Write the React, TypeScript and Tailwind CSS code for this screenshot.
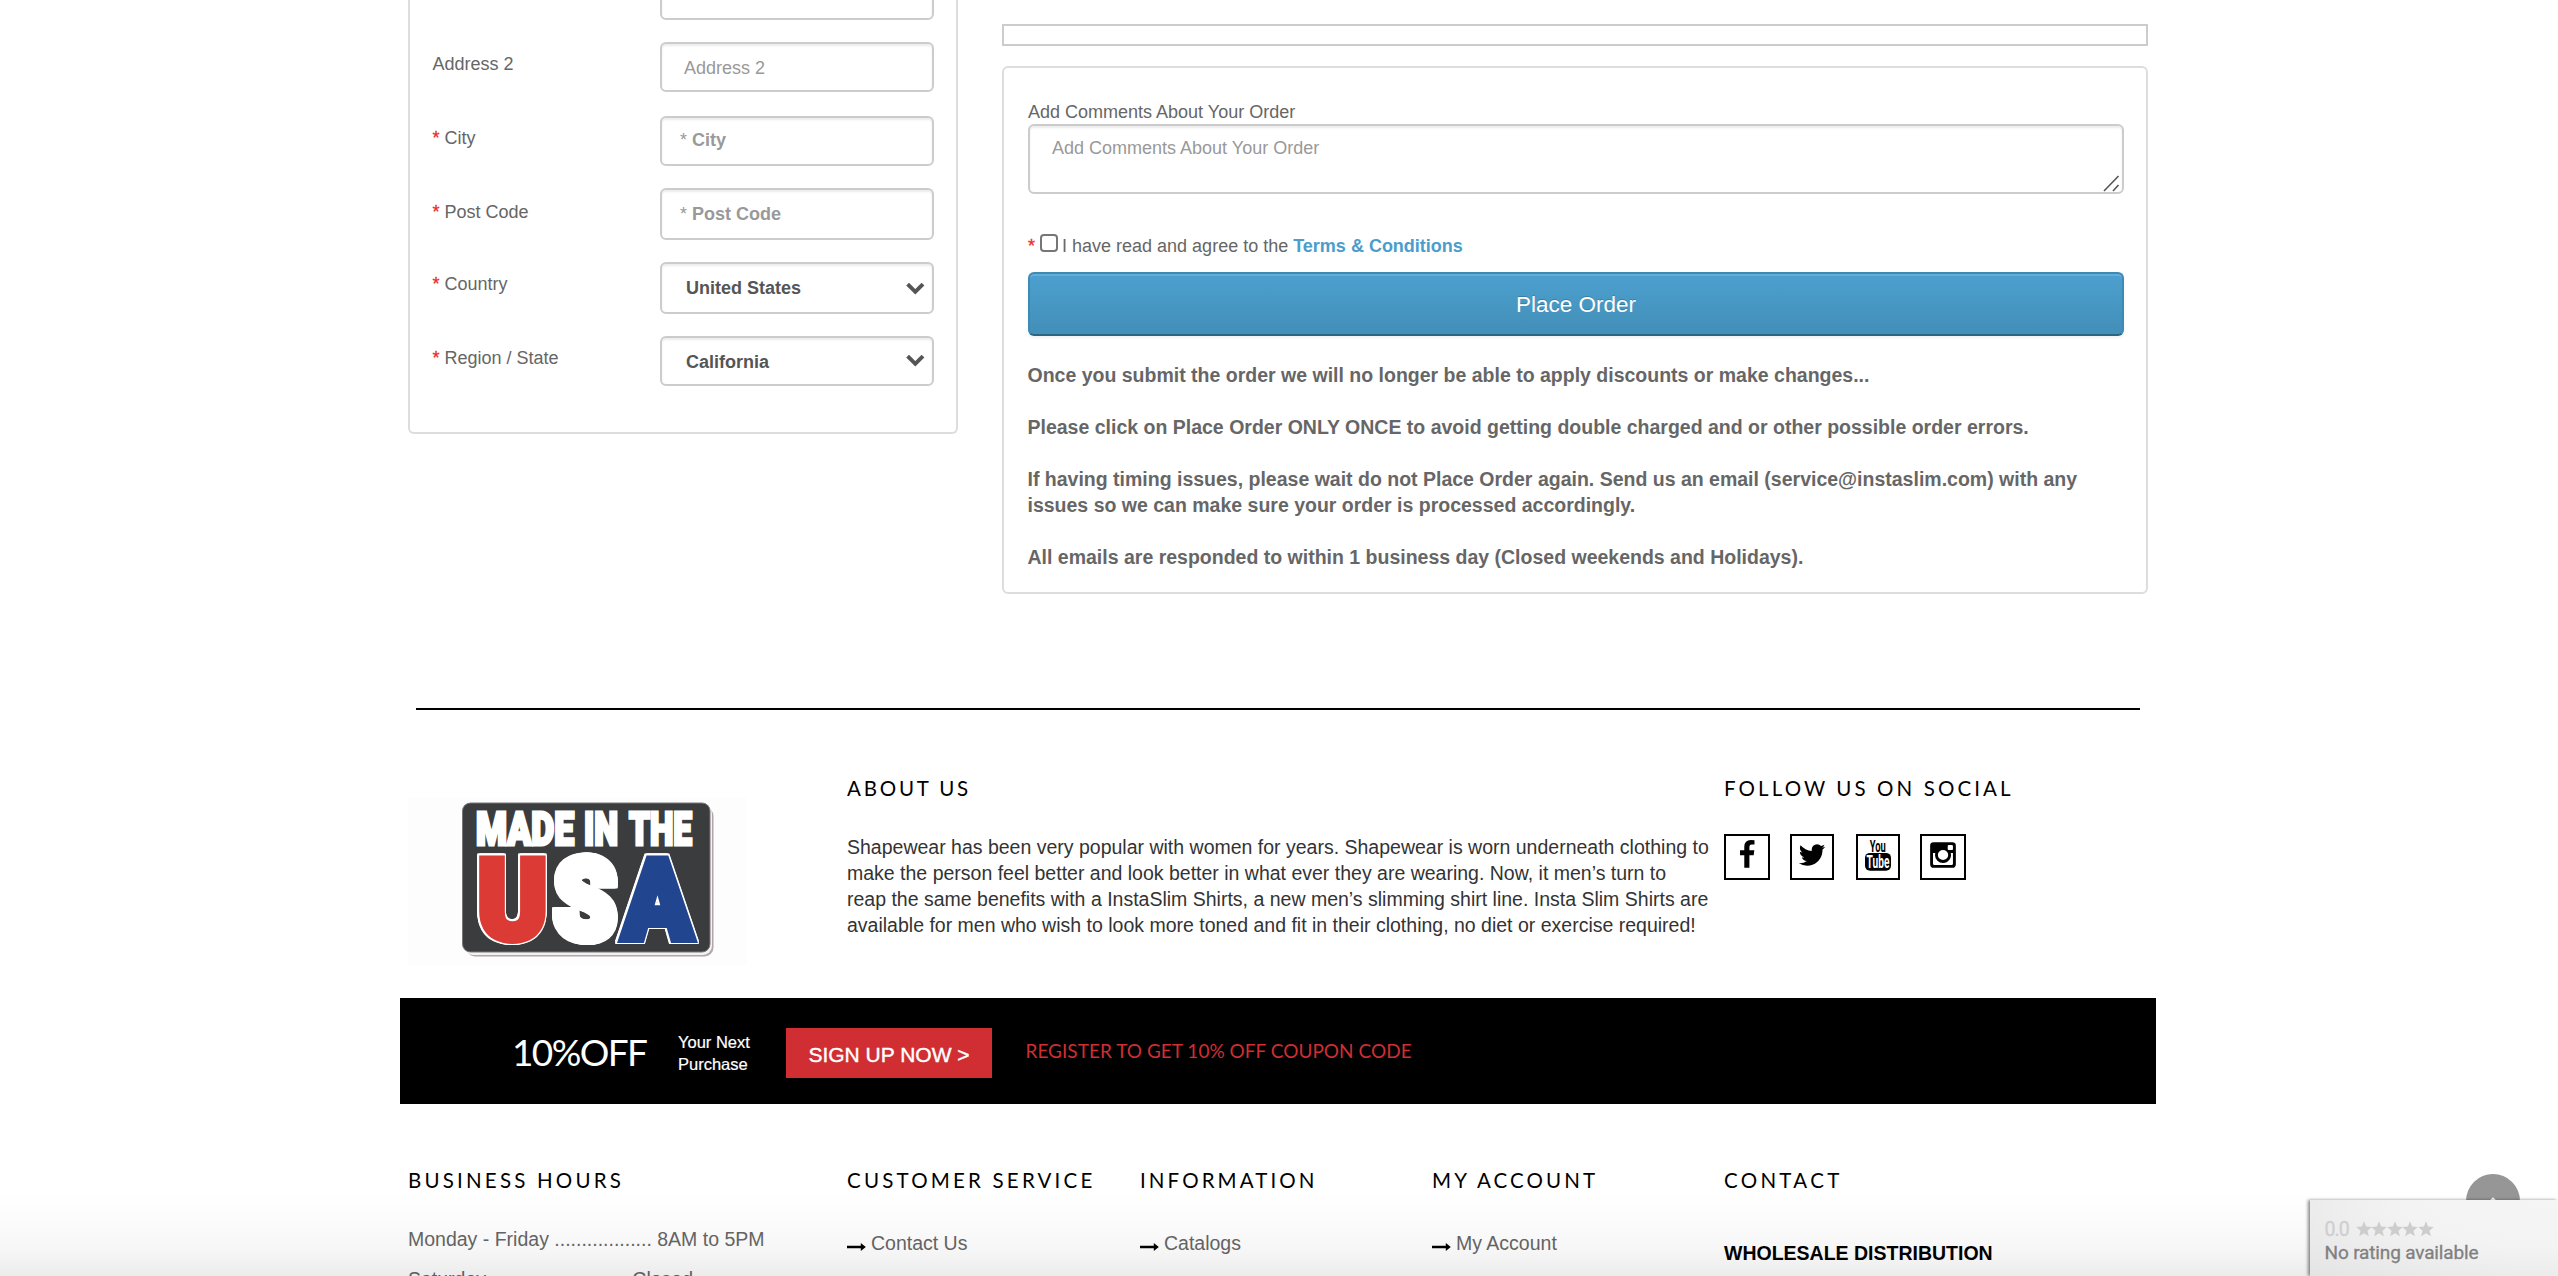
import type { ReactNode } from "react";

const fieldClass =
  "flex w-[274px] shrink-0 items-start rounded-[6px] border-2 border-[#ccc] bg-white text-[18px] leading-[26px] shadow-[inset_0_2px_2px_rgba(0,0,0,0.075)]";

function FieldRow({
  label,
  required,
  className,
  labelClass,
  children,
}: {
  label: string;
  required?: boolean;
  className: string;
  labelClass: string;
  children: ReactNode;
}) {
  return (
    <div className={`flex items-start justify-between ${className}`}>
      <div className={`ml-[-0.5px] whitespace-pre text-[18px] leading-[26px] text-[#666] ${labelClass}`}>
        {required && <span className="text-[#f02a1d] [-webkit-text-stroke:0.3px_#f02a1d]">* </span>}
        {label}
      </div>
      {children}
    </div>
  );
}

function Chevron({ className }: { className: string }) {
  return (
    <svg className={className} width="19" height="13" viewBox="0 0 19 13" fill="none">
      <path d="M1.6 2.2 9.3 9.8 17 2.2" stroke="#555" strokeWidth="4" />
    </svg>
  );
}

const usaLetters = [
  { char: "U", x: 477.5, width: 70, color: "#db3b34" },
  { char: "S", x: 554.5, width: 62, color: "#ffffff" },
  { char: "A", x: 622.5, width: 70, color: "#21458f" },
];

function MadeInUsa() {
  return (
    <svg
      width="339"
      height="167"
      viewBox="408 798 339 167"
      fontFamily="Roboto, 'Liberation Sans', sans-serif"
      fontWeight="900"
      strokeLinejoin="miter"
    >
      <rect x="408" y="798" width="339" height="167" fill="#fdfdfe" />
      <rect x="466" y="807" width="247.5" height="149.5" rx="9" fill="#b3a6a8" />
      <rect x="464" y="805" width="248" height="150" rx="9" fill="#f4f1f2" />
      <rect x="462.5" y="803" width="247.5" height="149" rx="8" fill="#3a3c3d" stroke="#77777a" strokeWidth="1" />
      <g fill="#fff" stroke="#fff" strokeWidth="3.2" fontSize="46">
        <text x="476" y="845.4" textLength="98" lengthAdjust="spacingAndGlyphs">MADE</text>
        <text x="584" y="845.4" textLength="34" lengthAdjust="spacingAndGlyphs">IN</text>
        <text x="629" y="845.4" textLength="63" lengthAdjust="spacingAndGlyphs">THE</text>
      </g>
      {/* A wide white outline sits behind a narrower one in the letter's own colour. */}
      {usaLetters.map((l) => (
        <text
          key={l.char}
          x={l.x}
          y="939"
          fontSize="112"
          textLength={l.width}
          lengthAdjust="spacingAndGlyphs"
          fill={l.color}
          stroke={l.color}
          strokeWidth="8"
          className="[filter:drop-shadow(1.6px_0_0_#fff)_drop-shadow(-1.6px_0_0_#fff)_drop-shadow(0_1.6px_0_#fff)_drop-shadow(0_-1.6px_0_#fff)]"
        >
          {l.char}
        </text>
      ))}
    </svg>
  );
}

const facebook =
  "M1343 12v264h-157q-86 0-116 36t-30 108v189h293l-39 296h-254v759H734V905H479V609h255V391q0-186 104-288.5T1115 0q147 0 228 12z";
const twitter =
  "M1684 408q-67 98-162 167 1 14 1 42 0 130-38 259.5T1369.5 1125 1185 1335.5t-258 146-323 54.5q-271 0-496-145 35 4 78 4 225 0 401-138-105-2-188-64.5T285 1033q33 5 61 5 43 0 85-11-112-23-185.5-111.5T172 710v-4q68 38 146 41-66-44-105-115t-39-154q0-88 44-163 121 149 294.5 238.5T884 653q-8-38-8-74 0-134 94.5-228.5T1199 256q140 0 236 102 109-21 205-78-37 115-142 178 93-10 186-50z";
const instagram =
  "M1490 1426v-648h-135q20 63 20 131 0 126-64 232.5T1137 1310t-240 62q-197 0-337-135.5T420 909q0-68 20-131H299v648q0 26 17.5 43.5T360 1487h1069q25 0 43-17.5t18-43.5zm-284-533q0-124-90.5-211.5T897 594q-127 0-217.5 87.5T589 893t90.5 211.5T897 1192q128 0 218.5-87.5T1206 893zm284-360V368q0-28-20-48.5t-49-20.5h-174q-29 0-49 20.5t-20 48.5v165q0 29 20 49t49 20h174q29 0 49-20t20-49zm174-208v1142q0 81-58 139t-139 58H325q-81 0-139-58t-58-139V325q0-81 58-139t139-58h1142q81 0 139 58t58 139z";

function SocialBox({ className, children }: { className: string; children: ReactNode }) {
  return (
    <a className={`flex h-[46px] items-start justify-center border-2 border-black pt-1 ${className}`}>{children}</a>
  );
}

function Glyph({ d }: { d: string }) {
  return (
    <svg width="30" height="30" viewBox="0 0 1792 1792">
      <path d={d} />
    </svg>
  );
}

function YouTube() {
  return (
    <svg width="28" height="32" viewBox="0 0 28 32" fontFamily="Roboto, 'Liberation Sans', sans-serif" fontWeight="700">
      <text x="5.8" y="12" fontSize="16.5" textLength="16" lengthAdjust="spacingAndGlyphs">
        You
      </text>
      <rect x="1" y="12.9" width="26" height="17.8" rx="5" />
      <text x="2.6" y="28" fontSize="17.5" fill="#fff" textLength="22.8" lengthAdjust="spacingAndGlyphs">
        Tube
      </text>
    </svg>
  );
}

function Heading({ className = "", children }: { className?: string; children: ReactNode }) {
  return (
    <h3 className={`whitespace-nowrap font-[Lato,sans-serif] text-[20.5px] leading-[26px] text-black ${className}`}>
      {children}
    </h3>
  );
}

function FooterLink({ children }: { children: ReactNode }) {
  return (
    <a className="mt-[37px] flex items-start text-[19.5px] leading-[26px] text-[#666]">
      <svg className="mt-3 mr-[5px]" width="19" height="10" viewBox="0 0 19 10">
        <path d="M0 3.7h13.8V1l5 4-5 4V6.3H0z" fill="#000" />
      </svg>
      {children}
    </a>
  );
}

export default function App() {
  return (
    <div className="relative h-[1276px] w-full overflow-hidden bg-white font-['Liberation_Sans',Arial,sans-serif] text-[#666]">
      <div className="ml-[400px] w-[1756px]">
        <main className="flex h-[708px] items-start">
          <section className="ml-2 h-[434px] w-[550px] rounded-b-[6px] border-2 border-t-0 border-[#ddd] pr-[22px] pl-[23px]">
            <FieldRow label="Address 1" required className="mt-[-30px]" labelClass="mt-[7px]">
              <div className={`${fieldClass} h-[50px] pt-[9px] pl-[18px] text-[#999]`}>
                <span className="whitespace-pre">* <b>Address 1</b></span>
              </div>
            </FieldRow>
            <FieldRow label="Address 2" className="mt-[22px]" labelClass="mt-[9px]">
              <div className={`${fieldClass} h-[50px] pt-[11px] pl-[22px] text-[#999]`}>Address 2</div>
            </FieldRow>
            <FieldRow label="City" required className="mt-6" labelClass="mt-[9px]">
              <div className={`${fieldClass} h-[50px] pt-[9px] pl-[18px] text-[#999]`}>
                <span className="whitespace-pre">* <b>City</b></span>
              </div>
            </FieldRow>
            <FieldRow label="Post Code" required className="mt-[22px]" labelClass="mt-[11px]">
              <div className={`${fieldClass} h-[52px] pt-[11px] pl-[18px] text-[#999]`}>
                <span className="whitespace-pre">* <b>Post Code</b></span>
              </div>
            </FieldRow>
            <FieldRow label="Country" required className="mt-[22px]" labelClass="mt-[9px]">
              <div className={`${fieldClass} h-[52px] justify-between pt-[11px] pr-[7px] pl-6 font-bold text-[#555]`}>
                United States
                <Chevron className="mt-[7px]" />
              </div>
            </FieldRow>
            <FieldRow label="Region / State" required className="mt-[22px]" labelClass="mt-[9px]">
              <div className={`${fieldClass} h-[50px] justify-between pt-[11px] pr-[7px] pl-6 font-bold text-[#555]`}>
                California
                <Chevron className="mt-[5px]" />
              </div>
            </FieldRow>
          </section>

          <section className="ml-11 w-[1146px] pt-6">
            <div className="h-[22px] border-2 border-[#ccc]" />
            <div className="mt-5 h-[528px] rounded-[6px] border-2 border-[#ddd] pt-[31px] pr-[22px] pl-6">
              <div className="h-[25px] text-[18px] leading-[26px]">Add Comments About Your Order</div>
              <div className="flex h-[70px] items-start justify-between rounded-[6px] border-2 border-[#ccc] pt-[9px] pr-[2px] pl-[22px] text-[18px] leading-[26px] text-[#999] shadow-[inset_0_2px_2px_rgba(0,0,0,0.075)]">
                Add Comments About Your Order
                <svg className="mt-[39px]" width="18" height="18" viewBox="0 0 18 18" fill="none" stroke="#555" strokeWidth="1.6">
                  <path d="M2 17 16.5 2M11 17l5.5-6" />
                </svg>
              </div>
              <div className="mt-[39px] flex h-[26px] items-start text-[18px] leading-[26px]">
                <span className="text-[#f02a1d] [-webkit-text-stroke:0.3px_#f02a1d]">*</span>
                <span className="mt-px mr-1 ml-[5px] h-[18px] w-[18px] rounded-[4px] border-2 border-[#767676] bg-white" />
                <span className="whitespace-pre">I have read and agree to the </span>
                <a className="font-bold text-[#4a9dcc]">Terms &amp; Conditions</a>
              </div>
              <div className="mt-[13px] flex h-16 justify-center rounded-[6px] border-2 border-[#3d8ab6] border-b-[#2c6583] bg-linear-to-b from-[#4ca0cf] to-[#428fb8] pt-[18px] text-[22.5px] leading-[26px] text-white shadow-[inset_0_2px_0_rgba(255,255,255,0.15),0_2px_3px_rgba(0,0,0,0.06)] [text-shadow:0_-1px_0_rgba(0,0,0,0.2)]">
                Place Order
              </div>
              <div className="mt-[26px] ml-[-0.5px] flex flex-col gap-[26px] text-[19.5px] leading-[26px] font-bold whitespace-nowrap">
                <p>Once you submit the order we will no longer be able to apply discounts or make changes...</p>
                <p>
                  Please click on Place Order ONLY ONCE to avoid getting double charged and or other possible order errors.
                </p>
                <p>
                  If having timing issues, please wait do not Place Order again. Send us an email (service@instaslim.com)
                  with any
                  <br />
                  issues so we can make sure your order is processed accordingly.
                </p>
                <p>All emails are responded to within 1 business day (Closed weekends and Holidays).</p>
              </div>
            </div>
          </section>
        </main>

        <div className="mx-4 h-[2px] bg-black" />

        <footer>
          <div className="flex h-[288px] items-start pl-2">
            <div className="w-[439px] pt-[88px]">
              <MadeInUsa />
            </div>
            <div className="w-[877px] pt-[65px]">
              <Heading className="tracking-[2.8px]">ABOUT US</Heading>
              <p className="mt-[33px] text-[19.5px] leading-[26px] whitespace-nowrap text-[#333]">
                Shapewear has been very popular with women for years. Shapewear is worn underneath clothing to
                <br />
                make the person feel better and look better in what ever they are wearing. Now, it men’s turn to
                <br />
                reap the same benefits with a InstaSlim Shirts, a new men’s slimming shirt line. Insta Slim Shirts are
                <br />
                available for men who wish to look more toned and fit in their clothing, no diet or exercise required!
              </p>
            </div>
            <div className="pt-[65px]">
              <Heading className="tracking-[3.1px]">FOLLOW US ON SOCIAL</Heading>
              <div className="mt-[33px] flex text-black">
                <SocialBox className="w-[46px]">
                  <Glyph d={facebook} />
                </SocialBox>
                <SocialBox className="ml-5 w-11">
                  <Glyph d={twitter} />
                </SocialBox>
                <SocialBox className="ml-[22px] w-11">
                  <YouTube />
                </SocialBox>
                <SocialBox className="ml-5 w-[46px]">
                  <Glyph d={instagram} />
                </SocialBox>
              </div>
            </div>
          </div>

          <div className="flex h-[106px] items-start bg-black text-white">
            <div className="mt-[32px] ml-[112px] w-[166px] font-[Lato,sans-serif] text-[37px] leading-[44px] tracking-[-1.6px]">
              10%OFF
            </div>
            <div className="mt-[33px] w-[108px] text-[16.5px] leading-[22px] [-webkit-text-stroke:0.2px_white]">
              Your Next
              <br />
              Purchase
            </div>
            <a className="mt-[30px] flex h-[50px] w-[206px] justify-center bg-[#d02e33] pt-[14px] text-[21px] leading-[26px] [-webkit-text-stroke:0.4px_white]">
              SIGN UP NOW &gt;
            </a>
            <div className="mt-10 ml-[33.5px] font-[Lato,sans-serif] text-[19px] leading-[26px] tracking-[0.02px] text-[#d02e33]">
              REGISTER TO GET 10% OFF COUPON CODE
            </div>
          </div>

          <div className="flex items-start pt-[63px] pl-2">
            <div className="w-[439px]">
              <Heading className="tracking-[3.2px]">BUSINESS HOURS</Heading>
              <p className="mt-[33px] text-[19.5px] leading-[26px]">Monday - Friday .................. 8AM to 5PM</p>
              <p className="mt-[14px] text-[19.5px] leading-[26px]">Saturday ......................... Closed</p>
            </div>
            <div className="w-[293px]">
              <Heading className="tracking-[3.2px]">CUSTOMER SERVICE</Heading>
              <FooterLink>Contact Us</FooterLink>
            </div>
            <div className="w-[292px]">
              <Heading className="tracking-[3.1px]">INFORMATION</Heading>
              <FooterLink>Catalogs</FooterLink>
            </div>
            <div className="w-[292px]">
              <Heading className="tracking-[3.1px]">MY ACCOUNT</Heading>
              <FooterLink>My Account</FooterLink>
            </div>
            <div>
              <Heading className="tracking-[3.3px]">CONTACT</Heading>
              <p className="mt-[47px] text-[19.5px] leading-[26px] font-bold text-black">
                WHOLESALE DISTRIBUTION
              </p>
            </div>
          </div>
        </footer>
      </div>

      <div className="pointer-events-none absolute inset-x-0 bottom-0 h-[86px] bg-[linear-gradient(to_bottom,rgba(0,0,0,0)_0%,rgba(0,0,0,0.015)_40%,rgba(0,0,0,0.035)_70%,rgba(0,0,0,0.075)_100%)]" />
      <div className="absolute right-[38px] bottom-12 flex h-[54px] w-[54px] justify-center rounded-full bg-[#969696] pt-6">
        <span className="h-1 w-1 rotate-45 bg-white" />
      </div>
      <div className="absolute right-0 bottom-0 h-[76px] w-[248px] bg-[radial-gradient(ellipse_at_100%_0%,#f5f5f5_0%,#f3f3f3_45%,#e4e4e4_100%)] pt-[18px] pl-[14.5px] font-[Roboto,sans-serif] shadow-[-2px_0_3px_rgba(0,0,0,0.45)]">
        <div className="flex h-6 items-start">
          <span className="w-[31px] text-[19.5px] leading-[24px] tracking-[-0.9px] text-[#cfcfcf] [-webkit-text-stroke:0.4px_#cfcfcf]">
            0.0
          </span>
          {[0, 1, 2, 3, 4].map((n) => (
            <svg key={n} className="mt-[3px] mr-[-0.5px]" width="16" height="16" viewBox="0 0 24 24" fill="#cdcdcd">
              <path d="M12 .5l3.2 7.9 8.5.6-6.5 5.5 2.1 8.3L12 18.2l-7.3 4.6 2.1-8.3L.3 9l8.5-.6z" />
            </svg>
          ))}
        </div>
        <div className="text-[19px] leading-[22px] tracking-[-0.15px] text-[#808080] [-webkit-text-stroke:0.3px_#808080]">
          No rating available
        </div>
      </div>
    </div>
  );
}
